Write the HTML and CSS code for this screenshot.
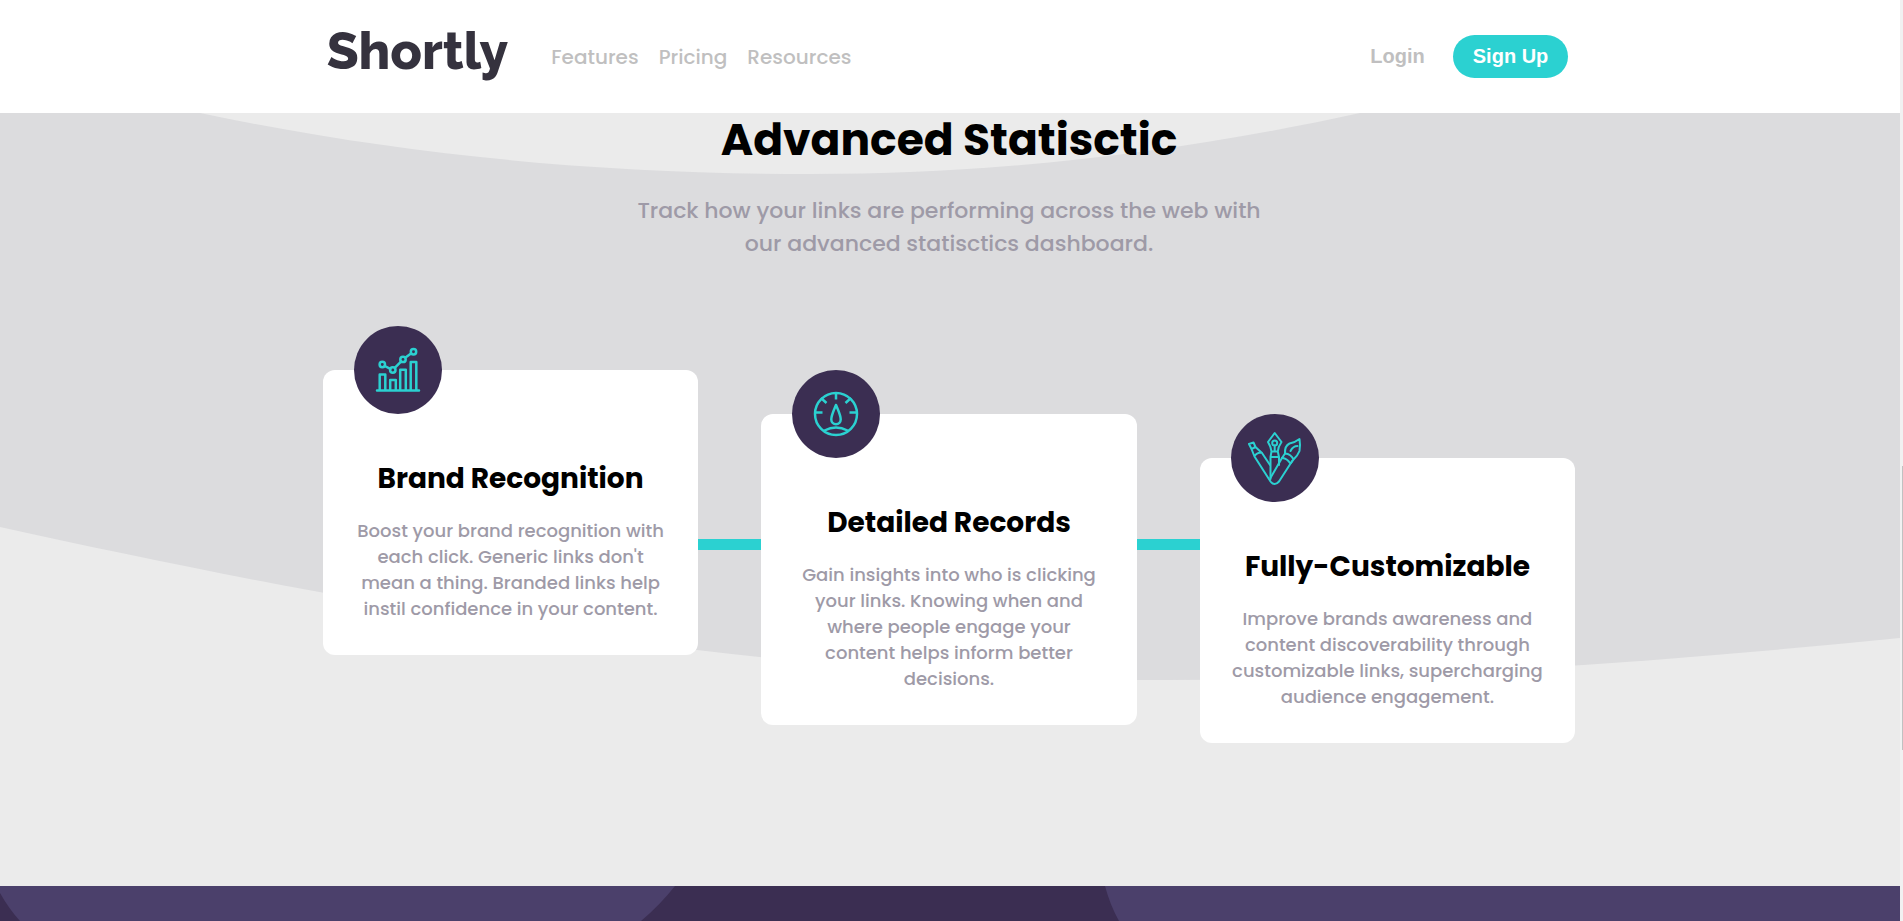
FILE: index.html
```html
<!DOCTYPE html>
<html lang="en">
<head>
<meta charset="utf-8">
<meta name="viewport" content="width=device-width, initial-scale=1">
<title>Shortly</title>
<link rel="stylesheet" href="styles.css">
</head>
<body>
<div class="page">
  <header class="header">
    <div class="container header-row">
      <a class="logo" href="#">Shortly</a>
      <nav class="nav">
        <a href="#">Features</a>
        <a href="#">Pricing</a>
        <a href="#">Resources</a>
      </nav>
      <div class="account">
        <button class="login" type="button">Login</button>
        <button class="signup" type="button">Sign Up</button>
      </div>
    </div>
  </header>

  <main class="stats">
    <svg class="backdrop" viewBox="0 113 1900 773" preserveAspectRatio="none" aria-hidden="true">
      <path fill="#dcdcde" d="M0 113H1900V638C1640 664 1400 680 1165 680C760 680 340 602 0 527Z"/>
      <path fill="#ebebeb" d="M200 113C400 155 600 174 810 174C1010 174 1190 150 1360 113Z"/>
    </svg>
    <div class="intro">
      <h1>Advanced Statisctic</h1>
      <p>Track how your links are performing across the web with our advanced statisctics dashboard.</p>
    </div>
    <div class="container cards">
      <article class="card">
        <span class="badge">
          <svg viewBox="13 16 88 88" aria-hidden="true">
            <path d="M36 80.500H78M38.700 80V64.500h5.600V80M49.200 80V70h5.600V80M59.200 80V59.700h5.600V80M69.700 80V52h5.600V80"/>
            <path d="M43.800 56l5.500 2.900M54 57.600l6-6M64.500 47.500l5.500-4"/>
            <circle cx="41.300" cy="54.500" r="2.700"/><circle cx="51.800" cy="60" r="2.700"/><circle cx="62" cy="49.400" r="2.700"/><circle cx="72.500" cy="41.800" r="2.700"/>
          </svg>
        </span>
        <h2>Brand Recognition</h2>
        <p>Boost your brand recognition with each click. Generic links don't mean a thing. Branded links help instil confidence in your content.</p>
      </article>
      <article class="card">
        <span class="badge">
          <svg viewBox="12 10 88 88" aria-hidden="true">
            <circle cx="56" cy="54" r="21"/>
            <path stroke-linecap="butt" d="M56 33v6.500M35 52.500h7.500M69.500 52.500h7.500M41 38l5.500 5M71 38l-5.500 5"/>
            <path d="M56 45C54 50 51.300 55 51.300 59.500a4.700 4.700 0 0 0 9.400 0C60.700 55 58 50 56 45ZM44.500 70.500Q56 64.500 67.500 70.500"/>
          </svg>
        </span>
        <h2>Detailed Records</h2>
        <p>Gain insights into who is clicking your links. Knowing when and where people engage your content helps inform better decisions.</p>
      </article>
      <article class="card">
        <span class="badge">
          <svg class="fine" viewBox="11 9 88 88" aria-hidden="true">
            <path d="M51.500 46.500Q51 42 48 37L54.700 28L61.500 37Q58 42 57.800 46.500ZM54.700 40.500V46M51.500 46.500L50.500 52H59L57.800 46.500M50.500 52V74M59 52V60"/>
            <circle cx="54.700" cy="38" r="2.500"/>
            <path d="M29 39L33.500 37.500L35.500 42L31.500 44ZM31.500 44L34.500 51.500M35.500 42L42 48M34.500 51Q37 47.500 41.500 47.500M34.500 51.500L50.500 76.500Q54.500 81.500 59 76.500L72.500 55.500M42 48L50 60M62 53L50.700 72.500"/>
            <path d="M62 53L65 48.500Q71 49 73.500 54.500L71 58M62.500 53Q67 53.500 70 58M65 48.500Q64.500 41 69.500 38.500Q75 37.500 79.500 34Q80.500 40 79.500 46Q78 50 73.500 54.500M70.500 46Q73 41 77.500 41"/>
          </svg>
        </span>
        <h2>Fully-Customizable</h2>
        <p>Improve brands awareness and content discoverability through customizable links, supercharging audience engagement.</p>
      </article>
    </div>
  </main>

  <section class="boost">
    <svg class="backdrop" viewBox="0 886 1900 35" preserveAspectRatio="none" aria-hidden="true">
      <path fill="#3b2e52" d="M0 893Q9 909 20 921H0ZM675 886H1105Q1110 905 1119 921H641Q660 905 675 886Z"/>
    </svg>
  </section>
</div>
<div class="scroll-track"><div class="scroll-thumb"></div></div>
</body>
</html>
```

FILE: styles.css
```css
* {
  box-sizing: border-box;
}

body {
  margin: 0;
  min-height: 100vh;
  display: flex;
  font-family: Poppins, Inter, sans-serif;
  background: #ebebeb;
}

h1, h2, p {
  margin: 0;
}

.page {
  flex: 1;
  min-width: 0;
  display: flex;
  flex-direction: column;
}

.container {
  width: 66%;
  margin: 0 auto;
}

.header {
  padding-right: 2px;
  background: #fff;
}

.header-row {
  display: flex;
  align-items: center;
  padding: 21px 7px 21px 4px;
}

.logo {
  font: 800 52px/60px Raleway, Lato, sans-serif;
  color: #35323e;
  text-decoration: none;
  padding-bottom: 11px;
}

.nav {
  display: flex;
  gap: 20px;
  margin-left: 43px;
}

.nav a {
  font-size: 20px;
  font-weight: 500;
  line-height: 30px;
  color: #c0bfc0;
  text-decoration: none;
}

.account {
  display: flex;
  align-items: center;
  gap: 8px;
  margin-left: auto;
}

.account button {
  height: 43px;
  padding: 0 20px;
  border: 0;
  border-radius: 22px;
  font: bold 20px "Liberation Sans", sans-serif;
}

.login {
  background: none;
  color: #c0bfc0;
}

.signup {
  background: #2bd1d1;
  color: #fff;
}

.stats {
  position: relative;
  padding: 0 2px 143px 0;
}

.backdrop {
  position: absolute;
  inset: 0;
  width: 100%;
  height: 100%;
}

.intro {
  position: relative;
  max-width: 660px;
  margin: 0 auto;
  text-align: center;
}

.intro h1 {
  font-size: 44px;
  font-weight: 700;
  line-height: 54px;
  white-space: nowrap;
}

.intro p {
  margin-top: 27px;
  font-size: 22px;
  font-weight: 500;
  line-height: 33px;
  color: #9e9aa7;
}

.cards {
  position: relative;
  display: grid;
  grid-template-columns: repeat(3, 1fr);
  gap: 5%;
  align-items: start;
  margin-top: 110px;
}

.cards::before {
  content: "";
  position: absolute;
  left: 5%;
  right: 5%;
  top: 169px;
  height: 11px;
  background: #2bd1d1;
}

.card {
  position: relative;
  padding: 91px 31px 33px;
  border-radius: 12px;
  background: #fff;
  text-align: center;
}

.card:nth-child(2) {
  margin-top: 44px;
}

.card:nth-child(3) {
  margin-top: 88px;
}

.badge {
  position: absolute;
  top: -44px;
  left: 31px;
  width: 88px;
  height: 88px;
  border-radius: 50%;
  background: #3b2e52;
}

.badge svg {
  display: block;
  fill: none;
  stroke: #2bd1d1;
  stroke-width: 2.5;
  stroke-linecap: round;
  stroke-linejoin: round;
}

.badge .fine {
  stroke-width: 2;
}

.card h2 {
  font-size: 28px;
  font-weight: 700;
  line-height: 36px;
}

.card p {
  margin-top: 21px;
  font-size: 18px;
  font-weight: 500;
  line-height: 26px;
  color: #9e9aa7;
}

.boost {
  position: relative;
  flex: 1;
  min-height: 35px;
  background: #4b406b;
}

.scroll-track {
  width: 3px;
  padding: 466px 0 0 2px;
  background: #f1f1f1;
}

.scroll-thumb {
  height: 284px;
  background: #c1c1c1;
}
```
